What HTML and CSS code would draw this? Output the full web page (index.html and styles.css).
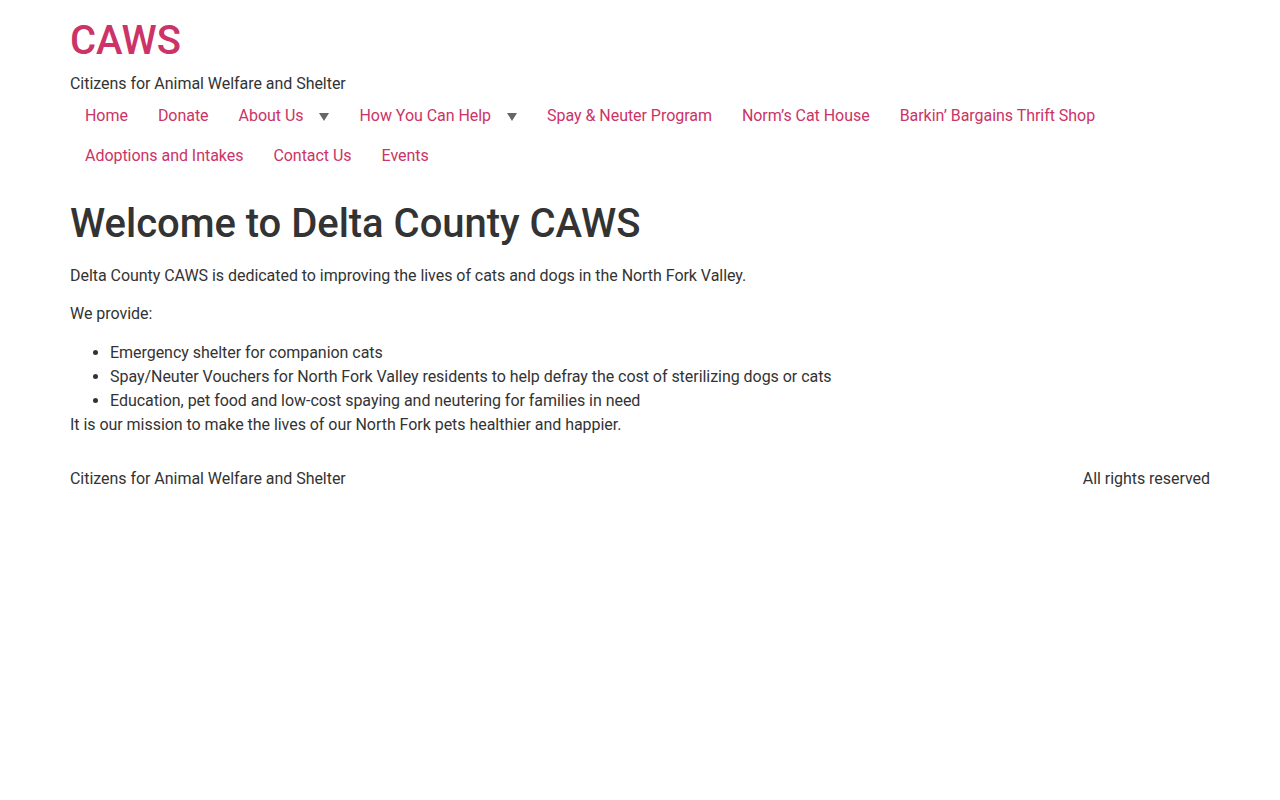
FILE: index.html
```html
<!DOCTYPE html>
<html lang="en">
<head>
<meta charset="utf-8">
<title>CAWS</title>
<link rel="stylesheet" href="styles.css">
</head>
<body>
<header class="site-header">
  <div class="branding">
    <h1 class="site-title"><a href="#">CAWS</a></h1>
    <p class="site-description">Citizens for Animal Welfare and Shelter</p>
  </div>
  <nav class="site-nav">
    <ul class="menu">
      <li><a href="#">Home</a></li>
      <li><a href="#">Donate</a></li>
      <li><a href="#" class="has-sub">About Us<svg class="sub-arrow" width="10" height="8" viewBox="0 0 10 8"><path d="M0 0H10L5 8Z"/></svg></a></li>
      <li><a href="#" class="has-sub">How You Can Help<svg class="sub-arrow" width="10" height="8" viewBox="0 0 10 8"><path d="M0 0H10L5 8Z"/></svg></a></li>
      <li><a href="#">Spay &amp; Neuter Program</a></li>
      <li><a href="#">Norm’s Cat House</a></li>
      <li><a href="#">Barkin’ Bargains Thrift Shop</a></li>
      <li><a href="#">Adoptions and Intakes</a></li>
      <li><a href="#">Contact Us</a></li>
      <li><a href="#">Events</a></li>
    </ul>
  </nav>
</header>
<main class="site-main">
  <h1 class="page-title">Welcome to Delta County CAWS</h1>
  <p>Delta County CAWS is dedicated to improving the lives of cats and dogs in the North Fork Valley.</p>
  <p>We provide:</p>
  <ul class="provide-list">
    <li>Emergency shelter for companion cats</li>
    <li>Spay/Neuter Vouchers for North Fork Valley residents to help defray the cost of sterilizing dogs or cats</li>
    <li>Education, pet food and low-cost spaying and neutering for families in need</li>
  </ul>
  <div class="mission">It is our mission to make the lives of our North Fork pets healthier and happier.</div>
</main>
<footer class="site-footer">
  <span>Citizens for Animal Welfare and Shelter</span>
  <span>All rights reserved</span>
</footer>
</body>
</html>
```

FILE: styles.css
```css
* { box-sizing: border-box; }
html, body { margin: 0; padding: 0; background: #fff; }
body {
  font-family: Roboto, "Liberation Sans", Arial, sans-serif;
  font-size: 16px;
  line-height: 1.5;
  color: #333;
  letter-spacing: -0.04px;
}
a { color: #cc3366; text-decoration: none; }

.site-header, .site-main, .site-footer {
  max-width: 1140px;
  margin: 0 auto;
}
.site-header { padding: 17px 0 16px; }
.site-title {
  margin: 0;
  font-size: 40px;
  font-weight: 500;
  line-height: 1.2;
  letter-spacing: 0;
}
.site-description { margin: 7px 0 0; }

.menu {
  list-style: none;
  margin: 0;
  padding: 0;
  display: flex;
  flex-wrap: wrap;
}
.menu a {
  display: flex;
  align-items: center;
  height: 40px;
  padding: 0 15px;
}
.sub-arrow {
  fill: #666;
  margin-left: 16px;
  margin-top: 2px;
}

.page-title {
  margin: 8px 0 16px;
  font-size: 40px;
  font-weight: 500;
  line-height: 1.2;
  letter-spacing: -0.03px;
}
.site-main p { margin: 0 0 14.4px; }
.provide-list { margin: 0; padding-left: 40px; }

.site-footer {
  display: flex;
  justify-content: space-between;
  padding-top: 30px;
}
```
